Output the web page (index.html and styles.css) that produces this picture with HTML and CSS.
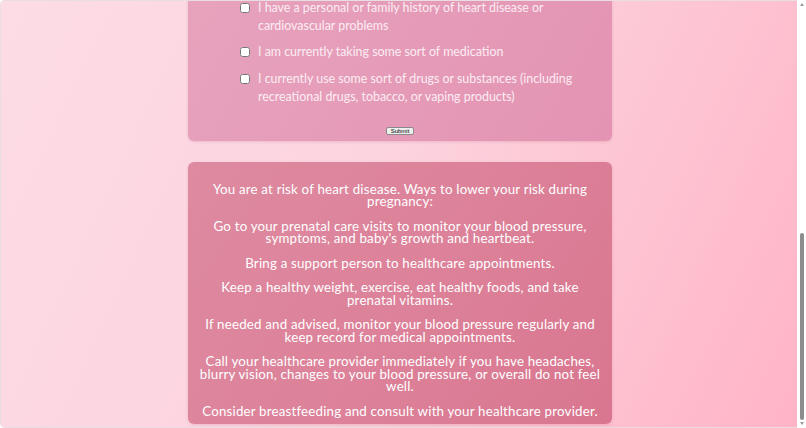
FILE: index.html
```html
<!DOCTYPE html>
<html lang="en">
<head>
<meta charset="utf-8">
<title>Heart Health in Pregnancy</title>
<link rel="stylesheet" href="styles.css">
</head>
<body>
<div class="app">
  <div class="page">
    <header class="masthead">
      <h1 class="masthead-title">Heart Health During Pregnancy</h1>
      <p class="masthead-sub">Answer a few questions to learn about your risk.</p>
    </header>

    <form class="card quiz">
      <h2 class="quiz-title">Check all that apply to you</h2>
      <ul class="checks">
        <li class="check"><input type="checkbox" class="box"><span class="check-text">I am 35 years of age or older</span></li>
        <li class="check"><input type="checkbox" class="box"><span class="check-text">I have high blood pressure or had it in a previous pregnancy</span></li>
        <li class="check"><input type="checkbox" class="box"><span class="check-text">I have diabetes or gestational diabetes</span></li>
        <li class="check"><input type="checkbox" class="box"><span class="check-text">I am overweight or have obesity</span></li>
        <li class="check"><input type="checkbox" class="box"><span class="check-text">I am pregnant with more than one baby</span></li>
        <li class="check"><input type="checkbox" class="box"><span class="check-text">I have had preeclampsia or preterm birth before</span></li>
        <li class="check"><input type="checkbox" class="box"><span class="check-text">I have a personal or family history of heart disease or cardiovascular problems</span></li>
        <li class="check"><input type="checkbox" class="box"><span class="check-text">I am currently taking some sort of medication</span></li>
        <li class="check"><input type="checkbox" class="box"><span class="check-text">I currently use some sort of drugs or substances (including recreational drugs, tobacco, or vaping products)</span></li>
      </ul>
      <div class="actions"><button type="button" class="submit">Submit</button></div>
    </form>

    <section class="card result">
      <p class="result-text">You are at risk of heart disease. Ways to lower your risk during pregnancy:</p>
      <p class="result-text">Go to your prenatal care visits to monitor your blood pressure, symptoms, and baby's growth and heartbeat.</p>
      <p class="result-text">Bring a support person to healthcare appointments.</p>
      <p class="result-text">Keep a healthy weight, exercise, eat healthy foods, and take prenatal vitamins.</p>
      <p class="result-text">If needed and advised, monitor your blood pressure regularly and keep record for medical appointments.</p>
      <p class="result-text">Call your healthcare provider immediately if you have headaches, blurry vision, changes to your blood pressure, or overall do not feel well.</p>
      <p class="result-text">Consider breastfeeding and consult with your healthcare provider.</p>
    </section>
  </div>
</div>
<div class="rail" aria-hidden="true">
  <span class="rail-arrow up"></span>
  <div class="rail-track"><span class="rail-thumb"></span></div>
  <span class="rail-arrow down"></span>
</div>
</body>
</html>
```
FILE: styles.css
```css
html, body {
  margin: 0;
  height: 100%;
  background: #ffffff;
}

body {
  display: flex;
  font-family: Lato, "Noto Sans", sans-serif;
}

.app {
  flex: 1;
  min-width: 0;
  box-sizing: border-box;
  height: 100%;
  border: 1px solid #eadde1;
  border-right: 0;
  border-radius: 5px 0 0 5px;
  background: linear-gradient(115deg, #fddce5 0%, #fcd4df 45%, #ffb4c6 100%);
  overflow-y: auto;
  scrollbar-width: none;
  display: flex;
  flex-direction: column-reverse;
}
.app::-webkit-scrollbar {
  display: none;
}

/* scrollbar rail */
.rail {
  flex: none;
  width: 9px;
  height: 100%;
  display: flex;
  flex-direction: column;
  align-items: center;
  background: #ffffff;
}
.rail-arrow {
  flex: none;
  width: 0;
  height: 0;
  border-left: 2px solid transparent;
  border-right: 2px solid transparent;
}
.rail-arrow.up {
  margin: 3px 0 4px;
  border-bottom: 3px solid #9a9a9a;
}
.rail-arrow.down {
  margin: 2px 0 3px;
  border-top: 3px solid #9a9a9a;
}
.rail-track {
  flex: 1;
  display: flex;
  flex-direction: column;
  justify-content: flex-end;
}
.rail-thumb {
  width: 4px;
  height: 187px;
  border-radius: 2px;
  background: #8d8d8d;
}

.page {
  display: flex;
  flex-direction: column;
  align-items: center;
  gap: 21px;
  padding: 24px 0 3px 2px;
}

.masthead {
  text-align: center;
  color: #d9748f;
}
.masthead-title {
  margin: 0 0 8px;
  font-size: 24px;
  font-weight: 700;
}
.masthead-sub {
  margin: 0;
  font-size: 13px;
}

.card {
  box-sizing: border-box;
  width: 424px;
  border-radius: 6px;
  box-shadow: 0 1px 3px rgba(150, 60, 90, 0.18);
}

.quiz {
  background: linear-gradient(120deg, #e8a6bf 0%, #e59bb8 60%, #e493b3 100%);
  padding: 20px 0 6px;
  color: #fcedf3;
}
.quiz-title {
  margin: 0 0 14px;
  font-size: 16px;
  font-weight: 700;
  text-align: center;
  color: #ffffff;
}

.checks {
  list-style: none;
  margin: 0;
  padding: 0 30px 0 52px;
  display: flex;
  flex-direction: column;
  gap: 8px;
}
.check {
  display: flex;
  align-items: flex-start;
  gap: 8px;
  font-size: 12.4px;
  line-height: 18px;
}
.check + .check:last-child {
  margin-top: 1px;
}
.box {
  flex: none;
  width: 10px;
  height: 10px;
  margin: 4px 0 0;
}
.check-text {
  flex: 1;
}

.actions {
  display: flex;
  justify-content: center;
  margin-top: 21px;
}
.submit {
  font-family: Arial, "Liberation Sans", sans-serif;
  font-size: 6px;
  line-height: 6px;
  padding: 0 4px;
  color: #000000;
  background: #efefef;
  border: 1px solid #8a8a8a;
  border-radius: 2px;
}

.result {
  background: linear-gradient(125deg, #de8aa0 0%, #dc8199 55%, #d9768f 100%);
  padding: 8px 11px 7px;
  text-align: center;
  color: #ffffff;
}
.result-text {
  margin: 12.2px 0 0;
  font-size: 13.3px;
  letter-spacing: 0.2px;
  line-height: 12.4px;
}
```
